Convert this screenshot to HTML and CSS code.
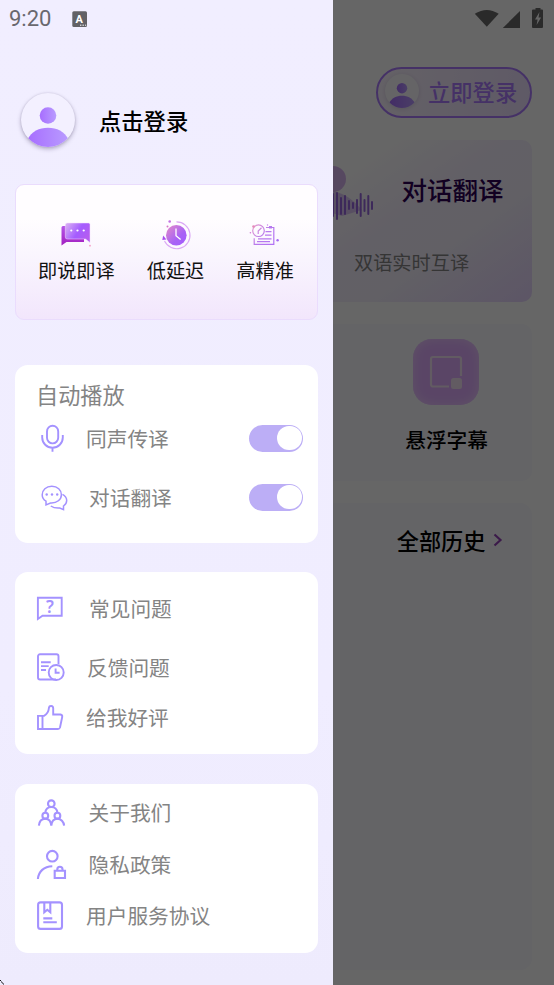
FILE: index.html
```html
<!DOCTYPE html>
<html lang="zh-CN">
<head>
<meta charset="utf-8">
<title>同声传译</title>
<link rel="stylesheet" href="styles.css">
</head>
<body>
<svg class="defs" width="0" height="0" aria-hidden="true">
  <defs>
    <linearGradient id="person" x1="0" x2="1"><stop offset="0" stop-color="#a76dff"/><stop offset="1" stop-color="#b99cff"/></linearGradient>
    <linearGradient id="front" x1="0" y1="0" x2="1" y2=".5"><stop offset="0" stop-color="#dcb4f3"/><stop offset=".6" stop-color="#a45cff"/><stop offset="1" stop-color="#b45cf0"/></linearGradient>
    <linearGradient id="back" x1="0" y1="0" x2="0" y2="1"><stop offset="0" stop-color="#b455e8"/><stop offset="1" stop-color="#a31fc0"/></linearGradient>
    <linearGradient id="clock" x1="0" y1="0" x2="1" y2="1"><stop offset="0" stop-color="#e58bc8"/><stop offset=".6" stop-color="#a862f5"/><stop offset="1" stop-color="#a35cff"/></linearGradient>
    <linearGradient id="report" gradientUnits="userSpaceOnUse" x1="3" y1="6" x2="26" y2="26"><stop offset="0" stop-color="#e79ccc"/><stop offset=".5" stop-color="#b97aed"/><stop offset="1" stop-color="#b070f5"/></linearGradient>
    <clipPath id="disc"><circle cx="27" cy="27" r="27"/></clipPath>
    <symbol id="avatar" viewBox="0 0 54 54">
      <circle cx="27" cy="22.5" r="8.3" fill="url(#person)"/>
      <path clip-path="url(#disc)" d="M6 54V47C11 38 18 34.7 27 34.7S43 38 48 47v7z" fill="url(#person)"/>
    </symbol>
  </defs>
</svg>

<div class="screen">
  <main class="home">
    <div class="status">
      <svg width="72" height="24" viewBox="0 0 72 24" fill="#696969">
        <path d="M.8 5.2Q12.8-3.2 24.7 5.2L12.8 19.2z" transform="translate(0 2) scale(1 .93)"/>
        <path d="M46 4v17H28.8z"/>
        <path fill-rule="evenodd" d="M58 3.500q0-1 1-1h2.500V1h5v1.500H68q1 0 1 1V20q0 1-1 1h-9q-1 0-1-1zM65.500 5l-4.500 7.500h2.600L62.600 18l4.500-7.500h-2.600z"/>
      </svg>
    </div>
    <div class="login">
      <span class="avatar small"><svg width="34" height="34"><use href="#avatar"/></svg></span>
      <span>立即登录</span>
    </div>
    <section class="talk">
      <svg class="wave" width="60" height="80" viewBox="0 0 60 80">
        <circle cx="11" cy="17" r="13" fill="#c795ea" opacity=".7"/>
        <path d="M0 30Q20 25 40 48L20 54 0 48z" fill="#c8a5f0" opacity=".6"/>
        <path d="M11 32v22M15 31v26M19 36v16M23 34v18M27 39v8M31 41v5M35 38v13M38.700 32v22M42.500 38v11M46.300 34v18M50 40v7" stroke="#9a68e0" stroke-width="2" stroke-linecap="round"/>
      </svg>
      <div class="talk-text">
        <h2>对话翻译</h2>
        <p>双语实时互译</p>
      </div>
    </section>
    <section class="float">
      <div class="tile">
        <svg width="34" height="34" viewBox="0 0 34 34"><path d="M20 31.500H4a2 2 0 0 1-2-2V4a2 2 0 0 1 2-2h26a2 2 0 0 1 2 2v17" fill="none" stroke="#f4e4f4" stroke-width="2.200"/><rect x="22" y="23" width="11" height="11" rx="2.500" fill="#f4e4f4"/></svg>
      </div>
      <span>悬浮字幕</span>
    </section>
    <section class="history">
      <span>全部历史</span>
      <svg width="10" height="14" viewBox="0 0 10 14"><path d="M1.500 1.500 7.500 7l-6 5.500" fill="none" stroke="#9543b8" stroke-width="2.200"/></svg>
    </section>
  </main>
  <div class="scrim"></div>

  <aside class="drawer">
    <div class="clock">
      <span>9:20</span>
      <svg width="16" height="17" viewBox="0 0 16 17"><rect x=".3" y=".2" width="14.700" height="15.800" rx="1.500" fill="#626166"/><text x="7.200" y="11.800" text-anchor="middle" class="badge">A</text><path d="M8 14.200h1.400M10.500 14.200h1.400M13 14.200h1.200" stroke="#fff" stroke-width="1"/></svg>
    </div>
    <div class="profile">
      <span class="avatar"><svg width="54" height="54"><use href="#avatar"/></svg></span>
      <span>点击登录</span>
    </div>

    <section class="features">
      <div class="feature">
        <svg width="32" height="32" viewBox="0 0 32 32">
          <path d="M3 7h3v12h18v4H6.500L1.500 26.500V8.500Q1.500 7 3 7z" fill="url(#back)"/>
          <path d="M7.300 4H28.500Q30 4 30 5.500V23.500L25.500 20H7.300Q5.300 20 5.300 18V6Q5.300 4 7.300 4z" fill="url(#front)" stroke="#f4dcff" stroke-width=".5"/>
          <g fill="#fff"><circle cx="11.300" cy="11.500" r="1.100"/><circle cx="17.500" cy="11.500" r="1.100"/><circle cx="23.700" cy="11.500" r="1.100"/></g>
          <circle cx="30" cy="26.700" r=".9" fill="#f5a0c8"/>
        </svg>
        <span>即说即译</span>
      </div>
      <div class="feature">
        <svg width="32" height="32" viewBox="0 0 32 32">
          <circle cx="16.300" cy="16.300" r="10.300" fill="url(#clock)"/>
          <path d="M16.500 2.900A13.400 13.400 0 1 1 4.500 22" fill="none" stroke="#dba9f5" stroke-width="1.100"/>
          <path d="M16 9.500v7.300l4.600 3.800" fill="none" stroke="#fff" stroke-width="1.300"/>
          <path d="M3.200 16.500 6.300 20.500 2.300 21z" fill="#a94df0"/>
          <circle cx="9.700" cy="2.500" r="1.300" fill="#c270e4"/><circle cx="7.500" cy="7.500" r="1" fill="#d878c8"/>
        </svg>
        <span>低延迟</span>
      </div>
      <div class="feature">
        <svg width="32" height="32" viewBox="0 0 32 32" fill="none" stroke="url(#report)" stroke-width="1.200">
          <circle cx="9.500" cy="11.700" r="5.800"/>
          <path d="M9.200 15v-3l3.300-3.200M17 8.500h7.800v16.800H5.200v-6M16.500 12.700h6M16 16.200h6.500M9 19.800h13.500M8 22.700h13"/>
          <g stroke="none"><circle cx="1.400" cy="13.700" r=".8" fill="#d47ad8"/><circle cx="28.600" cy="21.300" r="1.200" fill="#a86af5"/><circle cx="4.500" cy="7.500" r="1.300" fill="#e58bb8"/><circle cx="18.500" cy="6" r=".7" fill="#c785ec"/><path d="M20 7h3v2.500h-3z" fill="#b67aef"/></g>
        </svg>
        <span>高精准</span>
      </div>
    </section>

    <section class="card autoplay">
      <h3>自动播放</h3>
      <div class="row mic">
        <svg class="icon" viewBox="0 0 32 32"><rect x="11" y="2.800" width="11.200" height="17.600" rx="5.600"/><path d="M6.200 12v2.500a10.300 10.300 0 0 0 20.600 0V12M16.500 25v3.700"/></svg>
        <span>同声传译</span><i class="toggle"></i>
      </div>
      <div class="row chat">
        <svg class="icon thin" viewBox="0 0 32 32"><path d="M10 19.200V22.900L14.500 21C21 21.500 25.400 17.300 25.400 12.700 25.400 8 21.500 4.200 15.800 4.200S6.200 8 6.200 12.700C6.200 15.500 7.500 17.700 10 19.200zM26.500 12.300C31.800 15 32 21 27.500 24L27.500 27.700 23.800 26C20.500 26.300 17 25.500 14.800 24"/><g class="dots"><circle cx="10.700" cy="12.500" r="1.200"/><circle cx="16" cy="12.500" r="1.200"/><circle cx="21.200" cy="12.500" r="1.200"/></g></svg>
        <span>对话翻译</span><i class="toggle"></i>
      </div>
    </section>

    <section class="card help">
      <div class="row faq">
        <svg class="icon" viewBox="0 0 32 32"><path d="M1.900 4.800h23.800v18H6.500L1.900 26z"/><text class="mark" x="13.800" y="20" text-anchor="middle">?</text></svg>
        <span>常见问题</span>
      </div>
      <div class="row feedback">
        <svg class="icon" viewBox="0 0 32 32"><path d="M22.500 12V4.300a2 2 0 0 0-2-2H4a2 2 0 0 0-2 2v21.200a2 2 0 0 0 2 2h16M5 10.200h9.700M5 14.100h7.700M5 18h5M19.600 16.500v4.300h4"/><circle cx="20.200" cy="20.500" r="7.500"/></svg>
        <span>反馈问题</span>
      </div>
      <div class="row praise">
        <svg class="icon" viewBox="0 0 32 32"><path d="M2 13.900h6C11 12.300 12.700 9 13 5.500 13.300 3.500 17.200 3.200 17.200 6.300V12.500H24.500Q26.600 13 26.200 15L24 25.500Q23.500 27 22 27H2zM6.500 14v13"/></svg>
        <span>给我好评</span>
      </div>
    </section>

    <section class="card info">
      <div class="row about">
        <svg class="icon bold" viewBox="0 0 32 32"><circle cx="15.300" cy="6.700" r="3.300"/><circle cx="9.300" cy="18.700" r="2.900"/><circle cx="21.400" cy="18.700" r="2.900"/><path d="M9.300 15.800C9.500 12.300 12 10 15.300 10S21.200 12.300 21.400 15.800M2.900 28.700C3.200 24.700 5.500 21.700 9.300 21.700S15 24.700 15.300 28.700C15.600 24.700 17.800 21.700 21.400 21.700S27.800 24.700 28.100 28.700"/></svg>
        <span>关于我们</span>
      </div>
      <div class="row privacy">
        <svg class="icon bold" viewBox="0 0 32 32"><circle cx="16.300" cy="7.200" r="5.300"/><path d="M1.900 30C2.500 22.500 8 17.400 16.300 17.200M18.700 21.800h10.300v7.200H18.700zM21.300 21.500v-1.200a2.600 2.600 0 0 1 5.200 0v1.200"/></svg>
        <span>隐私政策</span>
      </div>
      <div class="row terms">
        <svg class="icon bold" viewBox="0 0 32 32"><rect x="2.100" y="2.400" width="23.900" height="26.500" rx="2.500"/><path d="M8.300 3v9.300l3-2.500 3 2.500V3M7.300 18.400h9M7.300 22.200h13.500"/></svg>
        <span>用户服务协议</span>
      </div>
    </section>
    <svg class="corner" width="5" height="5" viewBox="0 0 5 5"><path d="M0 0h1v1H0zM1 1.500h1v1H1zM2 2.500h1v1H2zM3 3.500h1v1H3z" fill="#111"/></svg>
  </aside>
</div>
</body>
</html>
```
FILE: styles.css
```css
* { box-sizing: border-box; margin: 0; padding: 0; }
body {
  width: 554px;
  height: 985px;
  overflow: hidden;
  font-family: "Noto Sans CJK SC", sans-serif;
}
.defs { position: absolute; }
.screen { position: relative; width: 554px; height: 985px; overflow: hidden; background: #fff; }

/* home page under the drawer */
.home { display: flex; flex-direction: column; height: 985px; padding: 0 22px 15px; }
.status { height: 67px; padding-top: 7px; margin-right: -14px; display: flex; justify-content: flex-end; }
.login {
  align-self: flex-end;
  display: flex;
  align-items: center;
  gap: 9px;
  width: 156px;
  height: 51px;
  padding: 0 0 4px 7px;
  border: 2px solid #ac7cff;
  border-radius: 26px;
  background: linear-gradient(100deg, #fbf4ff, #ecdfff);
  color: #ac7cff;
  font-size: 22.300px;
  font-weight: 500;
  line-height: 32px;
}
.avatar { display: block; width: 54px; height: 54px; border-radius: 50%; background: #f3f0ff; box-shadow: 0 2px 4px rgba(60, 50, 90, .35), 0 0 2px rgba(60, 50, 90, .15); }
.avatar svg { display: block; }
.avatar.small { width: 34px; height: 34px; background: #fcfaff; box-shadow: 0 1px 4px rgba(60, 50, 90, .15); }
.talk {
  display: flex;
  align-items: flex-start;
  height: 162px;
  margin-top: 22px;
  padding: 22px 0 0 300px;
  border-radius: 10px;
  background: linear-gradient(145deg, #fff 50%, #f6effe 66%, #f4f0fd 78%, #e7d5fe 100%);
}
.wave { flex: none; }
.talk-text { margin-left: -28px; padding-top: 7px; white-space: nowrap; }
.talk h2 { margin-left: 47.500px; color: #2d0055; font-size: 25.500px; font-weight: 500; line-height: 40px; }
.talk p { margin-top: 37px; color: #858585; font-size: 19.200px; line-height: 32px; }
.float {
  display: flex;
  flex-direction: column;
  align-items: flex-end;
  height: 157px;
  margin-top: 22px;
  padding: 15px 44px 0 0;
  border-radius: 10px;
  background: #fafaff;
  font-size: 20.700px;
  font-weight: 500;
}
.float span { margin-top: 18px; line-height: 32px; }
.tile {
  display: grid;
  place-items: center;
  width: 66px;
  height: 66px;
  margin-right: 9px;
  border-radius: 19px;
  background: #e0acff;
  box-shadow: inset 0 0 12px #eecfff;
}
.history {
  flex: 1;
  display: flex;
  align-items: flex-start;
  justify-content: flex-end;
  gap: 7px;
  margin-top: 22px;
  padding: 21px 29.500px 0 0;
  border-radius: 12px;
  background: #fafaff;
  font-size: 22.200px;
  font-weight: 500;
  line-height: 32px;
}
.history svg { margin-top: 9px; }
.scrim { position: absolute; inset: 0; background: rgba(0, 0, 0, .6); }

/* drawer */
.drawer {
  position: absolute;
  inset: 0 auto 0 0;
  width: 332.500px;
  padding: 0 14.500px 0 15px;
  background: linear-gradient(#f1eeff, #f0edff 70%, #eeebfd);
  color: #848484;
}
.clock { display: flex; align-items: center; gap: 19px; height: 38px; margin-left: -6px; color: #69686e; font: 22px/38px Roboto, sans-serif; }
.clock span { width: 44px; }
.badge { fill: #fff; font: bold 11px Roboto, sans-serif; }
.profile { display: flex; align-items: center; gap: 24px; height: 54px; margin: 55px 0 37px 6px; color: #000; font-size: 22.300px; font-weight: 500; }
.features {
  display: flex;
  align-items: flex-start;
  gap: 32px;
  height: 136px;
  margin-bottom: 45px;
  padding: 34px 0 0 22px;
  border: 1px solid #eadcfd;
  border-radius: 9px;
  background: linear-gradient(#fffdff 25%, #faf6fe 50%, #f2e6fc);
  color: #111;
  font-size: 19.200px;
}
.feature { display: flex; flex-direction: column; align-items: center; gap: 7px; line-height: 24px; white-space: nowrap; }
.card { border-radius: 13px; background: #fff; padding-left: 21px; }
.autoplay { height: 178px; padding-top: 13px; }
.help { height: 182px; margin-top: 29px; padding-top: 6px; }
.info { height: 169.500px; margin-top: 29.500px; padding-top: 3px; }
.card h3 { font-size: 22.200px; font-weight: 400; line-height: 32px; }
.row { display: flex; align-items: center; height: 59px; padding-right: 15px; font-size: 20.700px; line-height: 32px; }
.row span { flex: 1; margin-left: 18px; }
.icon { flex: none; width: 32px; height: 32px; fill: none; stroke: #a492ff; stroke-width: 1.900; transform: translateY(1px); }
.icon.thin { stroke-width: 1.500; }
.icon.bold { stroke-width: 2.100; }
.dots { fill: #a492ff; stroke: none; }
.mark { fill: #a492ff; stroke: none; font: 600 17px "Noto Sans", sans-serif; }
.mic { height: 56px; }
.chat { height: 62px; }
.praise { height: 42px; }
.info .row { height: 51.500px; }
.row.chat span, .row.faq span { margin-left: 21px; }
.row.feedback span { margin-left: 19px; }
.row.about span, .row.privacy span { margin-left: 20.500px; }
.toggle { width: 54px; height: 27px; padding: 1.200px; border-radius: 14px; background: #bcaef6; display: flex; justify-content: flex-end; }
.toggle::after { content: ""; width: 24.500px; height: 24.500px; border-radius: 50%; background: #fff; }
.corner { position: absolute; left: 0; bottom: 0; }
```
